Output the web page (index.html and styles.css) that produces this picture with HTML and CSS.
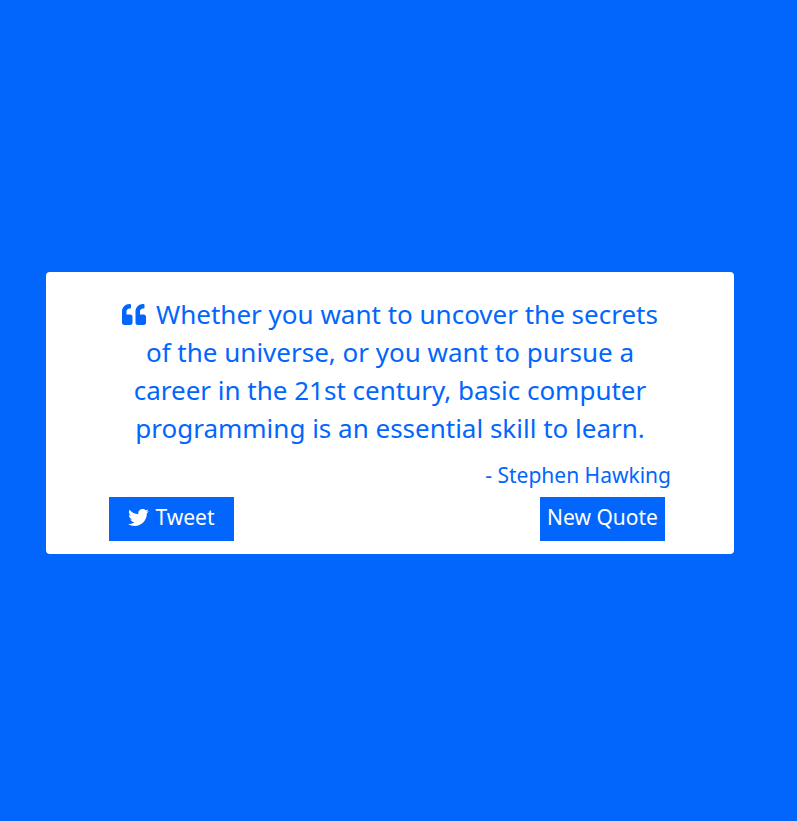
FILE: index.html
```html
<!DOCTYPE html>
<html lang="en">
<head>
<meta charset="utf-8">
<title>Random Quote Machine</title>
<meta name="viewport" content="width=device-width, initial-scale=1">
<link rel="stylesheet" href="styles.css">
</head>
<body>
<main class="quote-box">
  <p class="quote-text"><svg class="quote-icon" viewBox="0 0 512 448" aria-hidden="true"><path d="M464 224h-80v-64c0-35.300 28.700-64 64-64h8c13.300 0 24-10.700 24-24V24c0-13.300-10.700-24-24-24h-8C359.600 0 288 71.600 288 160v240c0 26.500 21.500 48 48 48h128c26.500 0 48-21.500 48-48V272c0-26.500-21.500-48-48-48zm-288 0H96v-64c0-35.300 28.700-64 64-64h8c13.300 0 24-10.700 24-24V24c0-13.300-10.700-24-24-24h-8C71.600 0 0 71.600 0 160v240c0 26.500 21.500 48 48 48h128c26.500 0 48-21.500 48-48V272c0-26.500-21.500-48-48-48z"/></svg>Whether you want to uncover the secrets of the universe, or you want to pursue a career in the 21st century, basic computer programming is an essential skill to learn.</p>
  <p class="quote-author">- Stephen Hawking</p>
  <div class="actions">
    <a class="button" href="#tweet"><svg class="tweet-icon" viewBox="0 0 512 416" aria-hidden="true"><path d="M459.370 103.634c.325 4.548.325 9.097.325 13.645 0 138.720-105.583 298.558-298.558 298.558-59.452 0-114.680-17.219-161.137-47.106 8.447.974 16.568 1.299 25.340 1.299 49.055 0 94.213-16.568 130.274-44.832-46.132-.975-84.792-31.188-98.112-72.772 6.498.974 12.995 1.624 19.818 1.624 9.421 0 18.843-1.300 27.614-3.573-48.081-9.747-84.143-51.980-84.143-102.985v-1.299c13.969 7.797 30.214 12.670 47.431 13.319-28.264-18.843-46.781-51.005-46.781-87.391 0-19.492 5.197-37.360 14.294-52.954 51.655 63.675 129.300 105.258 216.365 109.807-1.624-7.797-2.599-15.918-2.599-24.040C249.501 46.782 296.283 0 354.435 0c30.214 0 57.502 12.670 76.670 33.137 23.715-4.548 46.456-13.320 66.599-25.340-7.798 24.366-24.366 44.833-46.132 57.827 21.117-2.273 41.584-8.122 60.426-16.243-14.292 20.791-32.161 39.308-52.628 54.253z"/></svg>Tweet</a>
    <button class="button" type="button">New Quote</button>
  </div>
</main>
</body>
</html>
```
FILE: styles.css
```css
* {
  box-sizing: border-box;
}

body {
  min-height: 100vh;
  margin: 0;
  padding: 5px 63px 0 46px;
  display: flex;
  align-items: center;
  background: #0366fc;
  color: #0366fc;
  font-family: Tahoma, "Noto Sans", sans-serif;
}

svg {
  fill: currentColor;
}

.quote-box {
  flex: 1;
  padding: 23px 63px 13px;
  border-radius: 4px;
  background: #fff;
}

.quote-text {
  margin: 0;
  font-size: 26px;
  line-height: 38px;
  text-align: center;
}

.quote-icon {
  width: 24px;
  height: 21px;
  margin-right: 10px;
  vertical-align: -1px;
}

.quote-author {
  margin: 12px 0 6px;
  font-size: 21px;
  line-height: 32px;
  text-align: right;
}

.actions {
  display: flex;
  justify-content: space-between;
  padding-right: 6px;
}

.button {
  width: 125px;
  height: 44px;
  padding: 0 0 4px;
  display: flex;
  align-items: center;
  justify-content: center;
  gap: 6px;
  border: 0;
  background: #0366fc;
  color: #fff;
  font: inherit;
  font-size: 21px;
  text-decoration: none;
  white-space: nowrap;
  cursor: pointer;
}

.tweet-icon {
  width: 21px;
  height: 17px;
}
```
